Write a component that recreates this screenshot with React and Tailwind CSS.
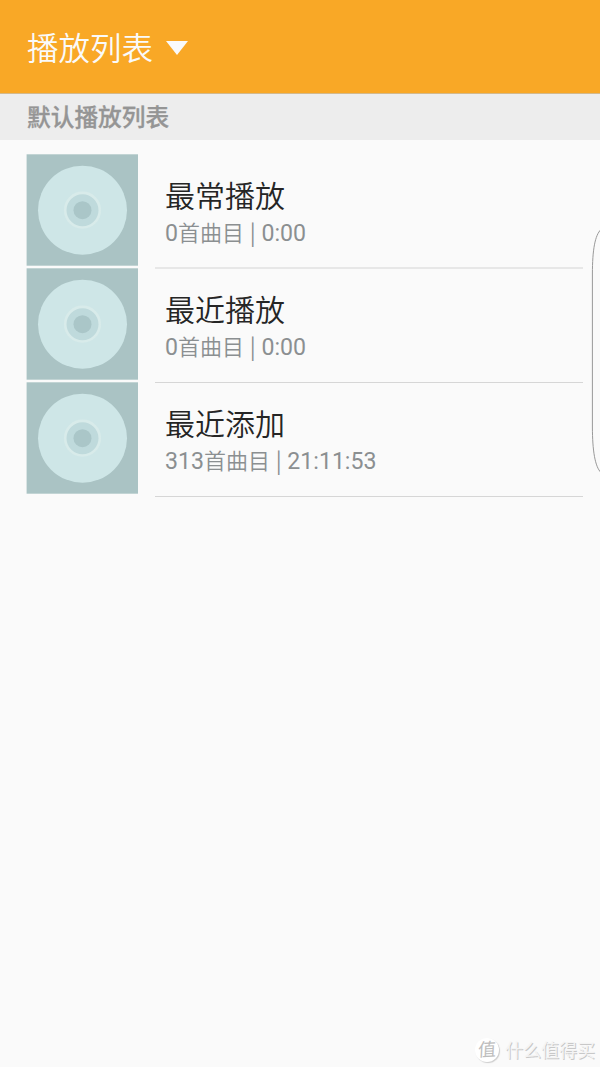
const PLAYLISTS = [
  { id: 'most-played', name: '最常播放', count: 0, duration: '0:00', divider: 'border-b-2 border-[#e7e7e7] -mb-px' },
  { id: 'recently-played', name: '最近播放', count: 0, duration: '0:00', divider: 'border-b border-[#d6d6d6] -mb-px' },
  { id: 'recently-added', name: '最近添加', count: 313, duration: '21:11:53', divider: 'border-b border-[#d6d6d6]' },
];

function DiscCover() {
  return (
    <svg viewBox="0 0 112 112" className="w-[112px] h-[112px] shrink-0">
      <rect x="0.6" y="0.3" width="111.4" height="111.4" fill="#aac3c4" />
      <circle cx="56.5" cy="56.2" r="44.5" fill="#cee6e7" />
      <circle cx="56.5" cy="56.2" r="17.3" fill="#bfdadc" stroke="#d8ebea" strokeWidth="2.6" />
      <circle cx="56.5" cy="56.2" r="9" fill="#aac6c8" />
    </svg>
  );
}

function PlaylistRow({ name, count, duration, divider }) {
  return (
    <li className="flex h-[114.2px] pl-[26.4px] pr-[17px]">
      <DiscCover />
      <div className={`ml-[16.6px] flex-1 pl-[10px] pt-[23px] ${divider}`}>
        <div className="h-[38px] text-[30px] font-[350] leading-[40px] text-[#252525]">{name}</div>
        <div className="h-[32px] whitespace-pre text-[23.1px] leading-[32px] text-[#8b8f91]">
          {count}
          <span className="font-['Noto_Sans_CJK_SC',sans-serif] text-[22px] font-[350]">首曲目</span>
          {' '}
          <span className="font-['Noto_Sans_CJK_SC',sans-serif] text-[22px]">|</span>
          {' '}
          {duration}
        </div>
      </div>
    </li>
  );
}

// Handle of the edge panel, half hidden behind the right side of the screen
function EdgeHandle() {
  return (
    <svg viewBox="0 0 10 250" className="absolute right-0 top-[226px] h-[250px] w-[10px]" fill="none">
      <path d="M11 3.5C5 9 2.4 24 2.4 48V201C2.4 224 5 241 11 246.500" stroke="#999" strokeWidth="1" />
    </svg>
  );
}

function Watermark() {
  return (
    <div className="absolute bottom-[3px] right-[5px] flex items-center">
      <span className="mr-[6px] flex h-[24px] w-[24px] -translate-y-px items-center justify-center rounded-full bg-white text-[18px] leading-none text-[#bdbdbd] shadow-[1px_1px_1px_#ccc]">
        <span className="-skew-x-6 -rotate-3">值</span>
      </span>
      <span className="text-[18px] leading-[26px] text-[#f4f4f4] [text-shadow:1px_1px_0_#c8c8c8]">什么值得买</span>
    </div>
  );
}

export default function App() {
  return (
    <div className="relative h-[1067px] w-[600px] overflow-hidden bg-[#fafafa] font-[Roboto,'Noto_Sans_CJK_SC',sans-serif]">
      <header className="flex h-[94px] items-center border-b border-[#d3b98c] bg-[#f9a826] pl-[27px] pt-[2px]">
        <h1 className="pb-[4px] font-['Noto_Sans_CJK_SC',sans-serif] text-[31.5px] font-[350] leading-[44px] text-[#fafafa]">
          播放列表
        </h1>
        <svg viewBox="0 0 22 14" className="ml-[13px] h-[14px] w-[22px]">
          <path d="M0 0H22L11 14Z" fill="#fafafa" />
        </svg>
      </header>

      <h2 className="h-[46px] bg-[#ededed] pl-[27px] pt-px text-[23.7px] font-medium leading-[46px] text-[#959595] [-webkit-text-stroke:0.3px_#959595]">
        默认播放列表
      </h2>

      <ul className="pt-[14px]">
        {PLAYLISTS.map((playlist) => (
          <PlaylistRow key={playlist.id} {...playlist} />
        ))}
      </ul>

      <EdgeHandle />
      <Watermark />
    </div>
  );
}
